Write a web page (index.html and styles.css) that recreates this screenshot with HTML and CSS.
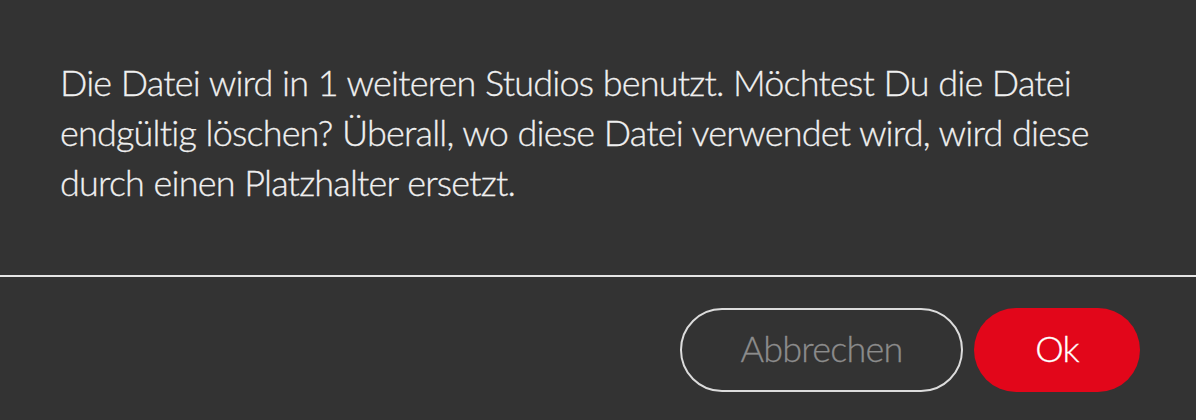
FILE: index.html
```html
<!DOCTYPE html>
<html lang="de">
<head>
<meta charset="utf-8">
<title>Datei löschen</title>
<link rel="stylesheet" href="styles.css">
</head>
<body>
<div class="dialog">
  <div class="dialog-body">
    <p class="message">Die Datei wird in 1 weiteren Studios benutzt. Möchtest Du die Datei endgültig löschen? Überall, wo diese Datei verwendet wird, wird diese durch einen Platzhalter ersetzt.</p>
  </div>
  <div class="dialog-footer">
    <button class="btn btn-secondary" type="button">Abbrechen</button>
    <button class="btn btn-primary" type="button">Ok</button>
  </div>
</div>
</body>
</html>
```
FILE: styles.css
```css
html, body {
  margin: 0;
  padding: 0;
  background: #333333;
}
body {
  width: 1196px;
  height: 420px;
  overflow: hidden;
}
.dialog {
  font-family: Lato, "Liberation Sans", sans-serif;
  font-weight: 300;
  color: #f0f0f0;
}
.dialog-body {
  padding: 57px 60px 0 60px;
  border-bottom: 2px solid #e6e6e6;
}
.message {
  margin: 0 0 68px 0;
  font-size: 36px;
  line-height: 50px;
  letter-spacing: -0.8px;
  word-spacing: 0.5px;
  -webkit-text-stroke: 0.3px #f0f0f0;
}
.dialog-footer {
  display: flex;
  justify-content: flex-end;
  gap: 11px;
  padding: 31px 56px 0 0;
}
.btn {
  font-family: inherit;
  font-weight: 300;
  font-size: 36px;
  letter-spacing: -0.8px;
  height: 84px;
  border-radius: 42px;
  padding: 0 0 5px 0;
  cursor: pointer;
}
.btn-secondary {
  width: 283px;
  background: transparent;
  border: 2px solid #dcdcdc;
  color: #8c8c8c;
  -webkit-text-stroke: 0.3px #8c8c8c;
}
.btn-primary {
  width: 166px;
  background: #e2061a;
  border: none;
  color: #ffffff;
  -webkit-text-stroke: 0.3px #ffffff;
}
```
